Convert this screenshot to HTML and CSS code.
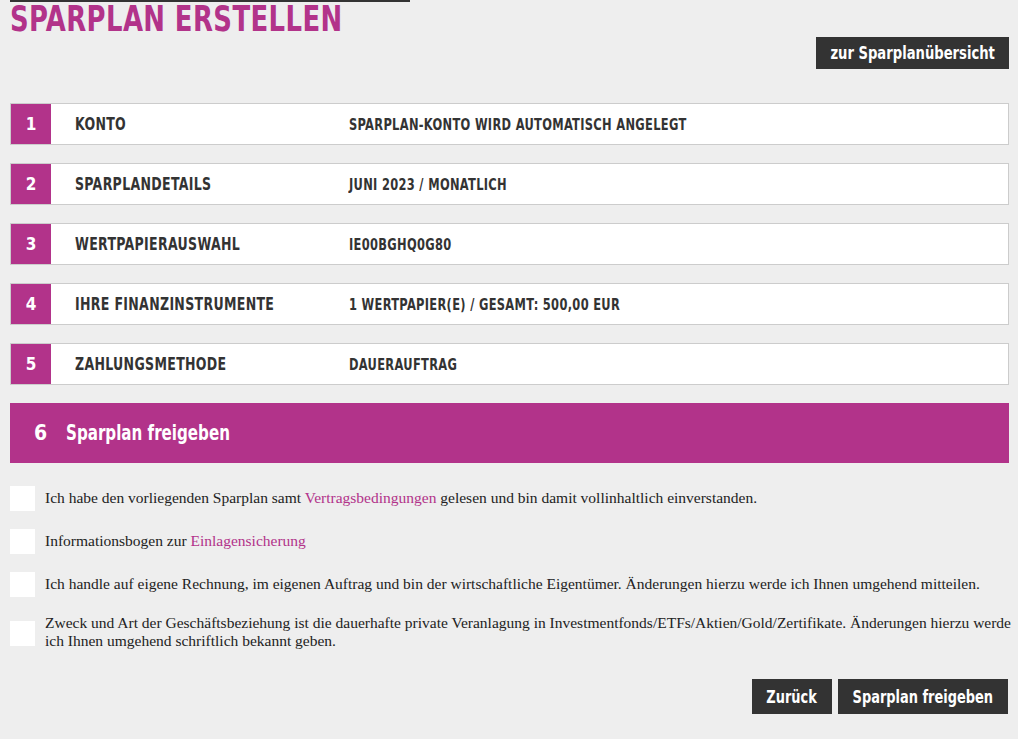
FILE: index.html
```html
<!DOCTYPE html>
<html lang="de">
<head>
<meta charset="utf-8">
<title>Sparplan erstellen</title>
<link rel="stylesheet" href="styles.css">
</head>
<body>
<div class="page">
  <div class="topline"></div>
  <h1 class="title"><span class="cond">SPARPLAN ERSTELLEN</span></h1>
  <div class="toolbar">
    <a class="btn btn-overview" href="#"><span class="cond-c">zur Sparplanübersicht</span></a>
  </div>

  <div class="steps">
    <div class="step"><div class="num">1</div><div class="label"><span class="cond">KONTO</span></div><div class="value"><span class="cond">SPARPLAN-KONTO WIRD AUTOMATISCH ANGELEGT</span></div></div>
    <div class="step"><div class="num">2</div><div class="label"><span class="cond">SPARPLANDETAILS</span></div><div class="value"><span class="cond">JUNI 2023 / MONATLICH</span></div></div>
    <div class="step"><div class="num">3</div><div class="label"><span class="cond">WERTPAPIERAUSWAHL</span></div><div class="value"><span class="cond">IE00BGHQ0G80</span></div></div>
    <div class="step"><div class="num">4</div><div class="label"><span class="cond">IHRE FINANZINSTRUMENTE</span></div><div class="value"><span class="cond">1 WERTPAPIER(E) / GESAMT: 500,00 EUR</span></div></div>
    <div class="step"><div class="num">5</div><div class="label"><span class="cond">ZAHLUNGSMETHODE</span></div><div class="value"><span class="cond">DAUERAUFTRAG</span></div></div>
  </div>

  <div class="active">
    <span class="active-num">6</span><span class="active-title"><span class="cond">Sparplan freigeben</span></span>
  </div>

  <div class="checks">
    <label class="check"><span class="box"></span><span class="ctext">Ich habe den vorliegenden Sparplan samt <a href="#">Vertragsbedingungen</a> gelesen und bin damit vollinhaltlich einverstanden.</span></label>
    <label class="check"><span class="box"></span><span class="ctext">Informationsbogen zur <a href="#">Einlagensicherung</a></span></label>
    <label class="check"><span class="box"></span><span class="ctext">Ich handle auf eigene Rechnung, im eigenen Auftrag und bin der wirtschaftliche Eigentümer. Änderungen hierzu werde ich Ihnen umgehend mitteilen.</span></label>
    <label class="check"><span class="box"></span><span class="ctext">Zweck und Art der Geschäftsbeziehung ist die dauerhafte private Veranlagung in Investmentfonds/ETFs/Aktien/Gold/Zertifikate. Änderungen hierzu werde ich Ihnen umgehend schriftlich bekannt geben.</span></label>
  </div>

  <div class="actions">
    <a class="btn btn-lg btn-back" href="#"><span class="cond-c">Zurück</span></a>
    <a class="btn btn-lg btn-submit" href="#"><span class="cond-c">Sparplan freigeben</span></a>
  </div>
</div>
</body>
</html>
```

FILE: styles.css
```css
* { box-sizing: border-box; }
html, body { margin: 0; padding: 0; }
body {
  background: #eeeeee;
  color: #333333;
  font-family: "DejaVu Sans Condensed", "Liberation Sans", sans-serif;
}
.page {
  padding: 0 9px 0 10px;
}
.cond {
  display: inline-block;
  white-space: nowrap;
  transform: scaleX(0.8);
  transform-origin: left center;
}
.cond-c {
  display: inline-block;
  white-space: nowrap;
  transform: scaleX(0.82);
  transform-origin: center center;
}
.topline {
  width: 400px;
  height: 2px;
  background: #333333;
}
.title {
  margin: 0;
  font-size: 36px;
  line-height: 34px;
  font-weight: 700;
  color: #b2338a;
  letter-spacing: 0.5px;
}
.toolbar {
  display: flex;
  justify-content: flex-end;
  margin-top: 1px;
}
.btn {
  display: inline-flex;
  align-items: center;
  justify-content: center;
  background: #333333;
  color: #ffffff;
  text-decoration: none;
  font-weight: 700;
  font-size: 17px;
  height: 32px;
  overflow: hidden;
}
.btn-overview {
  width: 193px;
}
.btn-overview .cond-c { transform: scaleX(0.86); }
.steps {
  margin-top: 34px;
  display: flex;
  flex-direction: column;
  gap: 18px;
}
.step {
  display: flex;
  align-items: stretch;
  height: 42px;
  background: #ffffff;
  border: 1px solid #cccccc;
  font-weight: 700;
  text-transform: uppercase;
}
.num {
  width: 40px;
  background: #b2338a;
  color: #ffffff;
  display: flex;
  align-items: center;
  justify-content: center;
  font-size: 17px;
}
.label {
  width: 298px;
  padding-left: 24px;
  display: flex;
  align-items: center;
  font-size: 17px;
  letter-spacing: 0.4px;
}
.label .cond { transform: scaleX(0.82); }
.value {
  display: flex;
  align-items: center;
  font-size: 16px;
  letter-spacing: 0.4px;
}
.value .cond { transform: scaleX(0.795); }
.active {
  margin-top: 18px;
  height: 60px;
  background: #b2338a;
  color: #ffffff;
  display: flex;
  align-items: center;
  padding-left: 24px;
  font-weight: 700;
  font-size: 21px;
}
.active-num { width: 32px; }
.checks {
  margin-top: 23px;
  margin-right: -6px;
  display: flex;
  flex-direction: column;
  gap: 18px;
}
.check {
  display: flex;
  align-items: center;
  gap: 10px;
  font-family: "Liberation Serif", serif;
  font-size: 15.5px;
  line-height: 18px;
  color: #222222;
}
.ctext {
  position: relative;
  top: -1px;
}
.box {
  flex: none;
  width: 25px;
  height: 25px;
  background: #ffffff;
}
.ctext a {
  color: #b2338a;
  text-decoration: none;
}
.actions {
  margin-top: 28px;
  display: flex;
  justify-content: flex-end;
  gap: 6px;
  padding-right: 1px;
}
.btn-lg {
  height: 35px;
  font-size: 18px;
}
.btn-lg .cond-c { transform: scaleX(0.8); }
.btn-back { width: 80px; }
.btn-submit { width: 170px; }
```
